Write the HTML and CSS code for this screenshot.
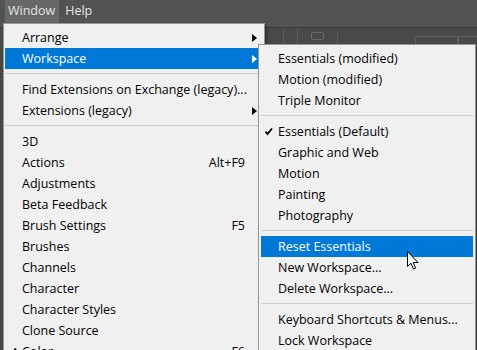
FILE: index.html
```html
<!DOCTYPE html>
<html lang="en">
<head>
    <meta charset="UTF-8">
    <title>Window menu</title>
    <link rel="stylesheet" href="styles.css">
</head>
<body>
    <div class="app">
        <div class="menubar">
            <span class="menubar-item active">Window</span>
            <span class="menubar-item">Help</span>
        </div>
        <div class="options">
            <span class="opt-line"></span>
            <span class="opt-line"></span>
            <span class="opt-icon"></span>
            <span class="opt-line short"></span>
            <span class="opt-box"></span>
            <span class="opt-box last"></span>
        </div>

        <div class="menu main-menu">
            <div class="item sub">Arrange</div>
            <div class="item sub selected">Workspace</div>
            <div class="sep"></div>
            <div class="item">Find Extensions on Exchange (legacy)...</div>
            <div class="item sub">Extensions (legacy)</div>
            <div class="sep"></div>
            <div class="item">3D</div>
            <div class="item"><span class="label">Actions</span><span class="key">Alt+F9</span></div>
            <div class="item">Adjustments</div>
            <div class="item">Beta Feedback</div>
            <div class="item"><span class="label">Brush Settings</span><span class="key">F5</span></div>
            <div class="item">Brushes</div>
            <div class="item">Channels</div>
            <div class="item">Character</div>
            <div class="item">Character Styles</div>
            <div class="item">Clone Source</div>
            <div class="item checked">
                <svg class="check" width="17" height="21" viewBox="0 0 17 21"><path d="M4.5 10.5 L6.5 13 L11 7.5" fill="none" stroke="#000" stroke-width="1.9"/></svg>
                <span class="label">Color</span><span class="key">F6</span>
            </div>
        </div>

        <div class="menu sub-menu">
            <div class="item">Essentials (modified)</div>
            <div class="item">Motion (modified)</div>
            <div class="item">Triple Monitor</div>
            <div class="sep"></div>
            <div class="item checked">
                <svg class="check" width="17" height="21" viewBox="0 0 17 21"><path d="M4.5 10.5 L6.5 13 L11 7.5" fill="none" stroke="#000" stroke-width="1.9"/></svg>
                <span class="label">Essentials (Default)</span>
            </div>
            <div class="item">Graphic and Web</div>
            <div class="item">Motion</div>
            <div class="item">Painting</div>
            <div class="item">Photography</div>
            <div class="sep"></div>
            <div class="item selected">Reset Essentials</div>
            <div class="item">New Workspace...</div>
            <div class="item">Delete Workspace...</div>
            <div class="sep"></div>
            <div class="item">Keyboard Shortcuts &amp; Menus...</div>
            <div class="item">Lock Workspace</div>
        </div>

        <svg class="cursor" width="13" height="20" viewBox="0 0 13 20">
            <path d="M0.5 0.5 L0.5 15.5 L4 12.2 L6.5 18 L8.6 17.1 L6.2 11.5 L11 11.5 Z" fill="#fff" stroke="#000" stroke-width="1"/>
        </svg>
    </div>
</body>
</html>
```

FILE: styles.css
```css
* {
    margin: 0;
    padding: 0;
    box-sizing: border-box;
}

body {
    font-family: 'Open Sans', 'Noto Sans', sans-serif;
    font-size: 12.5px;
    background: #474747;
    overflow: hidden;
}

.app {
    position: relative;
    width: 477px;
    height: 350px;
    overflow: hidden;
}

/* top menu bar */
.menubar {
    display: flex;
    height: 28px;
    padding-left: 5px;
    background: #535353;
    border-bottom: 1px solid #3b3b3b;
}

.menubar-item {
    height: 23px;
    line-height: 22px;
    padding: 0 4px 0 3px;
    margin-right: 3px;
    color: #e4e4e4;
}

.menubar-item.active {
    background: #686868;
}

/* options bar peeking between the menus */
.options {
    display: flex;
    align-items: flex-end;
    height: 16px;
    padding-left: 283px;
    background: #494949;
}

.opt-line {
    width: 1px;
    height: 15px;
    background: #5c5c5c;
    margin-right: 13px;
}

.opt-line.short {
    height: 11px;
    margin-right: 77px;
}

.opt-icon {
    width: 14px;
    height: 8px;
    margin: 0 13px 4px 0;
    border: 1px solid #6a6a6a;
    border-radius: 2px;
}

.opt-box {
    width: 47px;
    height: 8px;
    border: 1px solid #5e5e5e;
    border-bottom: none;
    border-radius: 3px 0 0 0;
}

.opt-box.last {
    width: 20px;
    border-radius: 0;
    border-right: none;
}

/* dropdown menus */
.menu {
    position: absolute;
    background: #f0f0f0;
    border: 1px solid #979797;
    padding: 3px 1px;
    color: #000;
    box-shadow: 2px 2px 3px rgba(0, 0, 0, 0.35);
}

.main-menu {
    left: 3px;
    top: 23px;
    width: 262px;
}

.sub-menu {
    left: 258px;
    top: 44px;
    width: 218px;
    padding: 3px 2px;
}

.item {
    display: flex;
    align-items: center;
    height: 21px;
    padding-left: 17px;
    white-space: nowrap;
}

.item::after {
    content: '';
    flex: none;
    width: 18px;
}

.item.sub::after {
    width: 0;
    height: 0;
    margin: 0 6px 0 auto;
    border-left: 5px solid #000;
    border-top: 4px solid transparent;
    border-bottom: 4px solid transparent;
}

.item.selected {
    background: #0078d7;
    color: #fff;
}

.item.sub.selected::after {
    border-left-color: #fff;
}

.item.checked {
    padding-left: 0;
}

.check {
    flex: none;
}

.label {
    flex: 1;
}

.key {
    flex: none;
}

.sep {
    height: 1px;
    margin: 4px 0 5px;
    background: #cfcfcf;
}

.cursor {
    position: absolute;
    left: 407px;
    top: 251px;
}
```
